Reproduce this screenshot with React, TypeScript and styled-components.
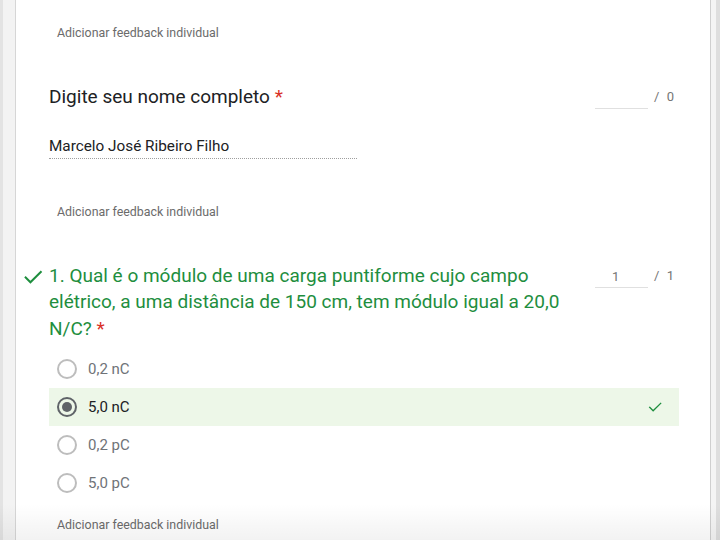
import styled, { createGlobalStyle } from "styled-components";

const GlobalStyle = createGlobalStyle`
  html, body {
    margin: 0;
    padding: 0;
    background: #f1f1f1;
  }

  body {
    font-family: Roboto, "Noto Sans", "Liberation Sans", sans-serif;
  }
`;

const Page = styled.div`
  display: flex;
  width: 720px;
  height: 540px;
  overflow: hidden;
  position: relative;
  background: #f1f1f1;
`;

const Gutter = styled.div<{ $w: number; $side: "left" | "right" }>`
  width: ${({ $w }) => $w}px;
  flex-shrink: 0;
  background: ${({ $side }) =>
    $side === "left"
      ? "linear-gradient(90deg, #e3e3e3 0 3px, #f3f3f3 3px)"
      : "linear-gradient(90deg, #f4f4f4 0 5px, #dedede 5px)"};
`;

const Card = styled.main`
  flex: 1;
  background: #fff;
  border-left: 1px solid #d6d6d6;
  border-right: 1px solid #cfcfcf;
  padding: 25px 31px 0 33px;
`;

const Feedback = styled.div<{ $mt?: number }>`
  margin-top: ${({ $mt }) => $mt ?? 0}px;
  padding-left: 8px;
  font-size: 12.4px;
  line-height: 16px;
  color: #6b6b6b;
`;

const Question = styled.section`
  margin-top: 43px;
`;

const Header = styled.div`
  display: flex;
  align-items: flex-start;
  justify-content: space-between;
  position: relative;
`;

const Title = styled.h2<{ $correct?: boolean }>`
  margin: 0;
  width: 528px;
  flex-shrink: 0;
  font-size: 19px;
  font-weight: 400;
  line-height: 26.5px;
  color: ${({ $correct }) => ($correct ? "#1e8e3e" : "#202124")};
`;

const Required = styled.span`
  color: #d93025;
`;

const CorrectMark = styled.div`
  position: absolute;
  left: -27px;
  top: 3px;
`;

const Score = styled.div`
  display: flex;
  align-items: center;
  gap: 6px;
  margin-right: 5px;
  font-size: 13px;
  color: #757575;
`;

const ScoreInput = styled.div`
  width: 53px;
  height: 24px;
  line-height: 26px;
  padding-left: 17px;
  box-sizing: border-box;
  border-bottom: 1px solid #e0e0e0;
  color: #757575;
`;

const ScoreTotal = styled.span`
  line-height: 26px;
  word-spacing: 4px;
`;

const Answer = styled.div`
  margin-top: 25px;
  width: 308px;
  font-size: 15.3px;
  line-height: 20px;
  padding-bottom: 2px;
  color: #202124;
  border-bottom: 1px dotted #9e9e9e;
`;

const Options = styled.ul`
  list-style: none;
  margin: 8px 0 0;
  padding: 0;
`;

const Option = styled.li<{ $selected?: boolean }>`
  display: flex;
  align-items: center;
  height: 38px;
  padding: 0 16px 0 8px;
  background: ${({ $selected }) => ($selected ? "#edf7e8" : "transparent")};
`;

const Radio = styled.span<{ $checked?: boolean }>`
  width: 20px;
  height: 20px;
  box-sizing: border-box;
  border-radius: 50%;
  border: 2px solid ${({ $checked }) => ($checked ? "#5f6368" : "#bdbdbd")};
  display: flex;
  align-items: center;
  justify-content: center;
  flex-shrink: 0;

  &::after {
    content: "";
    display: ${({ $checked }) => ($checked ? "block" : "none")};
    width: 10px;
    height: 10px;
    border-radius: 50%;
    background: #5f6368;
  }
`;

const OptionLabel = styled.span<{ $selected?: boolean }>`
  flex: 1;
  margin-left: 11px;
  font-size: 15px;
  color: ${({ $selected }) => ($selected ? "#202124" : "#6f7378")};
`;

const BottomShade = styled.div`
  position: absolute;
  left: 0;
  right: 0;
  bottom: 0;
  height: 36px;
  pointer-events: none;
  background: linear-gradient(180deg, rgba(0, 0, 0, 0) 0%, rgba(0, 0, 0, 0.05) 100%);
`;

const Check = ({ size = 18, stroke = 2 }: { size?: number; stroke?: number }) => (
  <svg width={size} height={size} viewBox="0 0 24 24" fill="none">
    <path
      d="M4 12.5l5.2 5.2L20.5 6.5"
      stroke="#1e8e3e"
      strokeWidth={stroke}
      strokeLinecap="square"
    />
  </svg>
);

const options = [
  { label: "0,2 nC" },
  { label: "5,0 nC", selected: true },
  { label: "0,2 pC" },
  { label: "5,0 pC" },
];

export default function App() {
  return (
    <>
      <GlobalStyle />
      <Page>
        <Gutter $w={15} $side="left" />
        <Card>
          <Feedback>Adicionar feedback individual</Feedback>

          <Question>
            <Header>
              <Title>
                Digite seu nome completo <Required>*</Required>
              </Title>
              <Score>
                <ScoreInput />
                <ScoreTotal>/ 0</ScoreTotal>
              </Score>
            </Header>
            <Answer>Marcelo José Ribeiro Filho</Answer>
            <Feedback $mt={45}>Adicionar feedback individual</Feedback>
          </Question>

          <Question>
            <Header>
              <CorrectMark>
                <Check size={22} stroke={2.2} />
              </CorrectMark>
              <Title $correct>
                1. Qual é o módulo de uma carga puntiforme cujo campo elétrico, a uma distância
                de 150 cm, tem módulo igual a 20,0 N/C? <Required>*</Required>
              </Title>
              <Score>
                <ScoreInput>1</ScoreInput>
                <ScoreTotal>/ 1</ScoreTotal>
              </Score>
            </Header>
            <Options>
              {options.map(({ label, selected }) => (
                <Option key={label} $selected={selected}>
                  <Radio $checked={selected} />
                  <OptionLabel $selected={selected}>{label}</OptionLabel>
                  {selected && <Check size={16} stroke={2} />}
                </Option>
              ))}
            </Options>
            <Feedback $mt={15}>Adicionar feedback individual</Feedback>
          </Question>
        </Card>
        <Gutter $w={9} $side="right" />
        <BottomShade />
      </Page>
    </>
  );
}
